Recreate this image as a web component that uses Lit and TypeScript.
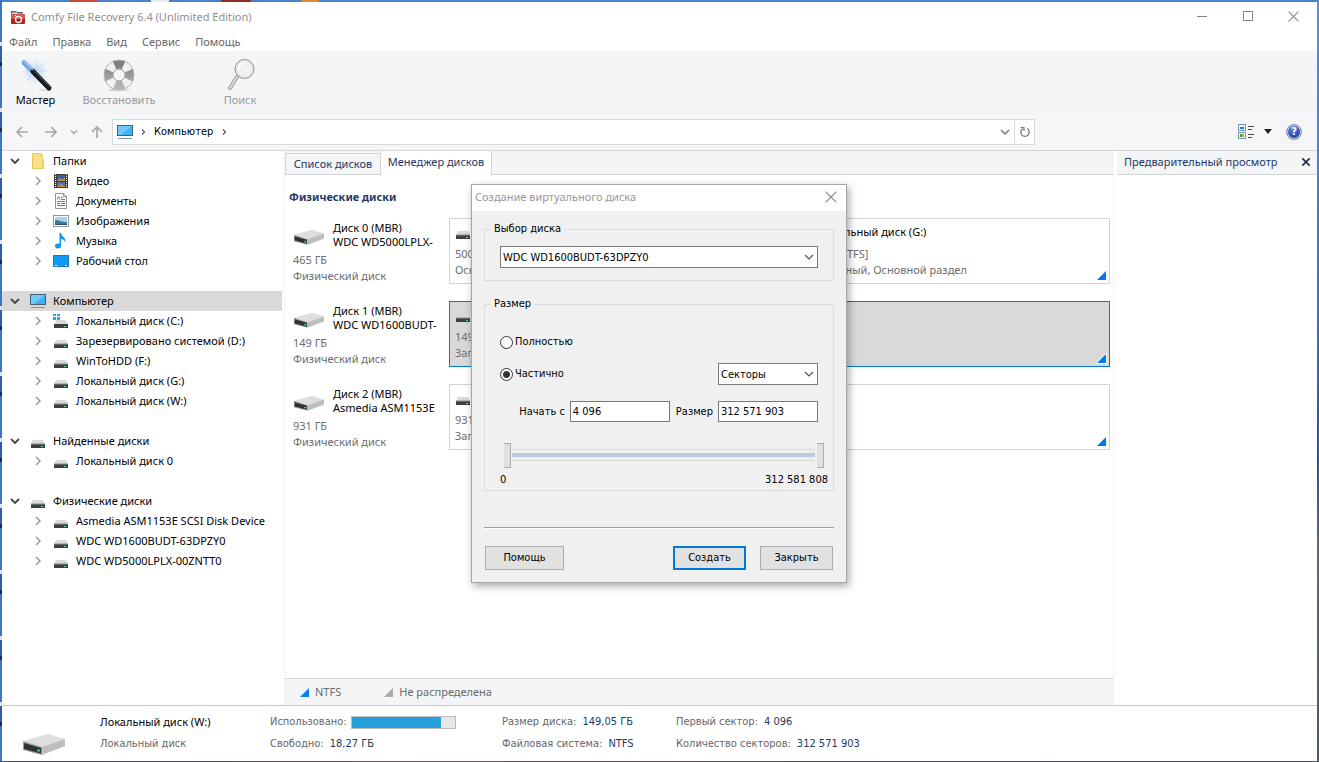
import { LitElement, html, svg, css, nothing, TemplateResult } from "lit";
import { customElement, state } from "lit/decorators.js";
import { classMap } from "lit/directives/class-map.js";

/* ---------- icons ---------- */

const appIcon = html`<svg width="16" height="16" viewBox="0 0 16 16">
  <path d="M1 2h5l1 1h6v5H1z" fill="#4e6f96"/><path d="M2 3.500h5l1 1h7v3H2z" fill="#ecc9c4"/>
  <rect x="1" y="6" width="14" height="9" rx="1" fill="#b3201c"/><rect x="1" y="5" width="14" height="5" rx="1" fill="#d2574c"/>
  <circle cx="8.500" cy="10.500" r="3" fill="none" stroke="#f6e6e4" stroke-width="1.500"/><path d="M5 6l2 2" stroke="#f6e6e4"/></svg>`;

const wand = html`<svg width="34" height="34" viewBox="0 0 34 34">
  <defs>
    <radialGradient id="glow"><stop offset="0" stop-color="#a9c6f5" stop-opacity=".9"/><stop offset="1" stop-color="#cfe0fa" stop-opacity="0"/></radialGradient>
    <linearGradient id="tip" x1="0" y1="1" x2="1" y2="0"><stop offset="0" stop-color="#2f62bd"/><stop offset=".6" stop-color="#8db8f7"/><stop offset="1" stop-color="#3a6fcf"/></linearGradient>
  </defs>
  <circle cx="16" cy="14" r="13" fill="url(#glow)"/>
  <path d="M18 2v22M6 13h22M8 22L26 5" stroke="#c9dbf8" stroke-width="1" opacity=".8"/>
  <path d="M20 32h12" stroke="#c5c9cd" stroke-width="1"/>
  <path d="M5 4.500L15 14.500" stroke="url(#tip)" stroke-width="5" stroke-linecap="round"/>
  <path d="M14 13.500L30 30" stroke="#15181c" stroke-width="5" stroke-linecap="round"/>
  <path d="M15.500 13.500L31 29" stroke="#59616b" stroke-width="1"/>
  <path d="M5.500 3.500L14.500 12.500" stroke="#a8caff" stroke-width="1"/></svg>`;

const lifebuoy = html`<svg width="34" height="34" viewBox="0 0 34 34">
  <defs><linearGradient id="buoy" x1="0" y1="0" x2="0" y2="1"><stop offset="0" stop-color="#7f7f7f"/><stop offset="1" stop-color="#b5b5b5"/></linearGradient></defs>
  <ellipse cx="17" cy="32" rx="11" ry="1.500" fill="#d5d7d8"/>
  <circle cx="17" cy="17" r="10.500" fill="none" stroke="url(#buoy)" stroke-width="9"/>
  <circle cx="17" cy="17" r="10.500" fill="none" stroke="#f1f1f1" stroke-width="9" stroke-dasharray="7.500 9" stroke-dashoffset="4" transform="rotate(45 17 17)"/>
  <circle cx="17" cy="17" r="15" fill="none" stroke="#b5b5b5" stroke-width="1"/>
  <circle cx="17" cy="17" r="6" fill="none" stroke="#a5a5a5" stroke-width="1"/></svg>`;

const magnifier = html`<svg width="34" height="34" viewBox="0 0 34 34">
  <path d="M14 19L7 30" stroke="#9d9d9d" stroke-width="4" stroke-linecap="round"/>
  <path d="M14 19L7 30" stroke="#dedede" stroke-width="2" stroke-linecap="round"/>
  <circle cx="21.500" cy="11" r="9.500" fill="#f0f1f1" stroke="#8f8f8f" stroke-width="1"/>
  <circle cx="21.500" cy="11" r="8.300" fill="none" stroke="#dcdcdc" stroke-width="1"/>
  <path d="M15.500 11a6 6 0 0 1 6-6" fill="none" stroke="#fff" stroke-width="2"/></svg>`;

const monitor = html`<svg width="18" height="16" viewBox="0 0 18 16">
  <rect x="1.500" y="1.500" width="15" height="10" fill="#3fb2f4" stroke="#46606f"/>
  <path d="M2 2h14L5 11H2z" fill="#71c9fa"/>
  <path d="M2 14.500h14" stroke="#7e93a0"/></svg>`;

const drive = html`<svg width="16" height="16" viewBox="0 0 16 16">
  <path d="M3 7h10l2 4H1z" fill="#d8dadc"/><rect x="1" y="11" width="14" height="4" fill="#3b3f42"/>
  <path d="M1 11h14" stroke="#8b8f92" stroke-width="1"/><rect x="11" y="13" width="2" height="1" fill="#5fe39a"/></svg>`;

const systemDrive = html`<svg width="16" height="16" viewBox="0 0 16 16">
  <path d="M3 7h10l2 4H1z" fill="#d8dadc"/><rect x="1" y="11" width="14" height="4" fill="#3b3f42"/>
  <rect x="11" y="13" width="2" height="1" fill="#5fe39a"/>
  <path d="M0 1h3v2H0zM4 1h3v2H4zM0 4h3v3H0zM4 4h3v3H4z" fill="#19aee0"/></svg>`;

const folder = html`<svg width="16" height="16" viewBox="0 0 16 16">
  <path d="M2.500 .500h9l2 8v7h-11z" fill="#fbdf83" stroke="#e9c65d"/><path d="M12 9.500h2v6h-2z" fill="#f3cc5b"/></svg>`;

const film = html`<svg width="16" height="16" viewBox="0 0 16 16">
  <rect x="1" y="1" width="14" height="14" fill="#3f3b39"/><rect x="4" y="2" width="8" height="6" fill="#3a5fa8"/><rect x="4" y="9" width="8" height="5" fill="#4c6fb5"/>
  <path d="M4 8l3-3 2 2 3-3v4zM4 14l4-3 4 2v1z" fill="#c9912e"/>
  <path d="M2.500 1v14M13.500 1v14" stroke="#fff" stroke-width="1" stroke-dasharray="1 1"/></svg>`;

const documentIcon = html`<svg width="16" height="16" viewBox="0 0 16 16">
  <path d="M2.500 .500h8l3 3v12h-11z" fill="#fff" stroke="#8f9498"/><path d="M10.500 .500v3h3" fill="none" stroke="#8f9498"/>
  <path d="M4 6.500l1.500-3L7 6.500M8 4.500h2M8 6.500h4M4 8.500h8M4 10.500h3M8 10.500h4M4 12.500h8" stroke="#2c93c8" fill="none"/></svg>`;

const picture = html`<svg width="16" height="16" viewBox="0 0 16 16">
  <rect x=".500" y="2.500" width="15" height="11" fill="#fff" stroke="#93989c"/><rect x="2" y="4" width="12" height="8" fill="#a7d3ee"/>
  <path d="M2 7c4 0 6 2 12 2v3H2z" fill="#3f7796"/><path d="M2 11h12v1H2z" fill="#2b4f63"/></svg>`;

const note = html`<svg width="16" height="16" viewBox="0 0 16 16">
  <ellipse cx="5" cy="13" rx="3" ry="2.400" fill="#1595e8"/><path d="M6.500 0h1.500c0 4 6 4 4 10 0-3-2-4-4-4v7H6.500z" fill="#1595e8"/></svg>`;

const desktop = html`<svg width="16" height="16" viewBox="0 0 16 16">
  <rect x=".500" y="2.500" width="15" height="11" fill="#109bf3" stroke="#1b79bd"/>
  <path d="M2 12.500h2M12 12.500h2" stroke="#fff"/></svg>`;

const externalDrive = (w: number, h: number) => html`<svg width=${w} height=${h} viewBox="0 0 42 22">
  <path d="M0 8L25 1l17 5-23 8z" fill="#dedede"/><path d="M0 8l19 6v8L0 17z" fill="#9a9a9a"/>
  <path d="M1 10l17 5v5.500L1 16z" fill="#2f3232"/><path d="M19 14L42 6v7l-23 9z" fill="#bdbdbd"/>
  <rect x="14" y="16.500" width="3" height="2" fill="#37c98a"/></svg>`;

const arrow = (rotate: number) => html`<svg width="14" height="14" viewBox="0 0 14 14">
  <g transform="rotate(${rotate} 7 7)"><path d="M13 7H2M7 2L2 7l5 5" fill="none" stroke="#a4a7aa" stroke-width="1.700"/></g></svg>`;

const chevronRight = html`<svg width="8" height="10" viewBox="0 0 8 10"><path d="M2 1l4 4-4 4" fill="none" stroke="#9b9b9b" stroke-width="1.500"/></svg>`;
const chevronSmall = html`<svg width="6" height="8" viewBox="0 0 6 8"><path d="M2 1.500L4.500 4 2 6.500" fill="none" stroke="#555" stroke-width="1.200"/></svg>`;
const chevronDown = (color: string, width = 1.2) => html`<svg class="chev" width="10" height="8" viewBox="0 0 10 8">
  <path d="M1 2l4 4 4-4" fill="none" stroke=${color} stroke-width=${width}/></svg>`;
const chevronTiny = html`<svg width="8" height="6" viewBox="0 0 8 6"><path d="M1 1.500l3 3 3-3" fill="none" stroke="#a4a7aa" stroke-width="1.500"/></svg>`;
const cross = (size: number, color: string, width: number) => html`<svg width=${size} height=${size} viewBox="0 0 10 10">
  <path d="M0.500 .500l9 9M9.500 .500l-9 9" stroke=${color} stroke-width=${width}/></svg>`;
const refresh = html`<svg width="12" height="14" viewBox="0 0 12 14">
  <path d="M8 3.500A4.200 4.200 0 1 1 4 3.500" fill="none" stroke="#7a7a7a" stroke-width="1.400"/><path d="M1.500 2.500H5V6" fill="none" stroke="#7a7a7a" stroke-width="1.200"/></svg>`;
const viewMode = html`<svg width="16" height="16" viewBox="0 0 16 16">
  <rect x=".500" y=".500" width="7" height="6" fill="#e8f2fa" stroke="#7896b5"/><rect x="2" y="3" width="4" height="2" fill="#2d8a72"/>
  <rect x=".500" y="8.500" width="7" height="6" fill="#e8f2fa" stroke="#7896b5"/><path d="M2 10h2v3H2z" fill="#44a04c"/><path d="M4 10h2v3H4z" fill="#c99a2a"/>
  <path d="M10 2.500h6M10 5.500h4M10 10.500h6M10 13.500h4" stroke="#454c54"/></svg>`;
const corner = (color: string, outlined = false) => html`<svg class="corner" width="11" height="11" viewBox="0 0 11 11">
  ${outlined ? svg`<path d="M11 -1V11H-1z" fill="#fff"/>` : nothing}<path d="M10 1v9H1z" fill=${color}/></svg>`;

/* ---------- data ---------- */

interface Item { label: string; icon: TemplateResult }
interface Branch { label: string; icon: TemplateResult; children: Item[] }

const branches: Branch[] = [
  { label: "Папки", icon: folder, children: [
    { label: "Видео", icon: film }, { label: "Документы", icon: documentIcon }, { label: "Изображения", icon: picture },
    { label: "Музыка", icon: note }, { label: "Рабочий стол", icon: desktop } ] },
  { label: "Компьютер", icon: monitor, children: [
    { label: "Локальный диск (C:)", icon: systemDrive }, { label: "Зарезервировано системой (D:)", icon: drive },
    { label: "WinToHDD (F:)", icon: drive }, { label: "Локальный диск (G:)", icon: drive }, { label: "Локальный диск (W:)", icon: drive } ] },
  { label: "Найденные диски", icon: drive, children: [{ label: "Локальный диск 0", icon: drive }] },
  { label: "Физические диски", icon: drive, children: [
    { label: "Asmedia ASM1153E SCSI Disk Device", icon: drive }, { label: "WDC WD1600BUDT-63DPZY0", icon: drive },
    { label: "WDC WD5000LPLX-00ZNTT0", icon: drive } ] },
];

interface Part { name: string; size: string; info: string; }
const disks: { name: string; model: string; size: string; parts: Part[] }[] = [
  { name: "Диск 0 (MBR)", model: "WDC WD5000LPLX-", size: "465 ГБ", parts: [
    { name: "", size: "500 МБ", info: "Основной раздел" },
    { name: "Локальный диск (G:)", size: "465 ГБ [NTFS]", info: "Загрузочный, Основной раздел" } ] },
  { name: "Диск 1 (MBR)", model: "WDC WD1600BUDT-", size: "149 ГБ", parts: [
    { name: "", size: "149 ГБ", info: "Загрузочный" } ] },
  { name: "Диск 2 (MBR)", model: "Asmedia ASM1153E", size: "931 ГБ", parts: [
    { name: "", size: "931 ГБ", info: "Загрузочный" } ] },
];

const baseStyles = css`
  * { box-sizing: border-box; }
  svg { display: block; flex: none; }
  button, input, select { font: inherit; color: inherit; margin: 0; border-radius: 0; }
  .plain { border: 0; padding: 0; background: none; display: flex; align-items: center; justify-content: center; }
`;

/* ---------- virtual disk dialog ---------- */

@customElement("virtual-disk-dialog")
export class VirtualDiskDialog extends LitElement {
  @state() private partial = true;

  static styles = [baseStyles, css`
    :host { box-sizing: border-box; display: block; width: 376px; background: #f0f0f0; border: 1px solid #a5a5a5; color: #000;
      box-shadow: 2px 3px 8px rgba(0, 0, 0, .35); font: 11px/14px "DejaVu Sans Condensed", "DejaVu Sans", sans-serif; }
    header { display: flex; align-items: center; justify-content: space-between; height: 26px; padding: 0 9px 2px 3px;
      background: #fff; color: #999; font: 11px/16px "Noto Sans", sans-serif; }
    h2 { margin: 0; font: inherit; }
    main { padding: 11px 12px 12px; }
    fieldset { margin: 0 0 16px; border: 1px solid #dcdcdc; padding: 10px 15px 12px; min-width: 0; }
    legend { margin-left: -9px; padding: 0 3px; }
    .select { display: grid; align-items: center; }
    .select > * { grid-area: 1 / 1; }
    .select select { appearance: none; width: 100%; height: 22px; border: 1px solid #7a7a7a; background: #fff; padding: 1px 2px 0; }
    .chev { justify-self: end; margin-right: 4px; pointer-events: none; }
    .size { padding: 20px 15px 3px; margin-bottom: 36px; }
    .row { display: flex; align-items: center; justify-content: space-between; height: 22px; margin-bottom: 10px; }
    .radio { display: flex; align-items: center; gap: 2px; }
    .radio input { appearance: none; width: 13px; height: 13px; border: 1px solid #333; border-radius: 50%; background: #fff; }
    .radio input:checked { background: radial-gradient(circle, #333 0 3px, #fff 4px); }
    .unit { width: 100px; }
    .range { display: grid; grid-template-columns: 1fr 100px auto 100px; align-items: center; margin-top: 16px; }
    .range label { padding: 0 5px 0 6px; text-align: right; }
    .range input { width: 100%; min-width: 0; height: 21px; border: 1px solid #7a7a7a; background: #fff; padding: 0 2px; }
    .slider { display: grid; align-items: center; height: 26px; margin: 20px -6px 0 4px;
      background: linear-gradient(#b9c9de, #b9c9de) 8px 11px / calc(100% - 17px) 4px no-repeat,
        linear-gradient(#dddccb 0 1px, #eef0f0 1px 11px, #dddccb 11px 12px) 8px 7px / calc(100% - 17px) 12px no-repeat; }
    .slider input { grid-area: 1 / 1; appearance: none; width: 100%; height: 26px; background: none; pointer-events: none; outline: 0; }
    .slider input::-webkit-slider-thumb { appearance: none; width: 7px; height: 25px; background: #e0e0e0; border: 1px solid #adadad; border-left: 0; pointer-events: auto; }
    .scale { display: flex; justify-content: space-between; margin: 5px -10px 0 0; }
    footer { display: flex; gap: 14px; border-top: 1px solid #a0a0a0; box-shadow: inset 0 1px #fff; padding: 18px 1px 0; }
    footer button { width: 73px; height: 24px; padding: 0; border: 1px solid #adadad; background: #e1e1e1; }
    footer .help { width: 79px; margin-right: auto; }
    footer .primary { border: 2px solid #0078d7; }
  `];

  render() {
    return html`
      <header><h2>Создание виртуального диска</h2><button class="plain" aria-label="Закрыть окно">${cross(12, "#888", 1)}</button></header>
      <main>
        <fieldset>
          <legend>Выбор диска</legend>
          <div class="select"><select aria-label="Выбор диска"><option>WDC WD1600BUDT-63DPZY0</option></select>${chevronDown("#555")}</div>
        </fieldset>
        <fieldset class="size">
          <legend>Размер</legend>
          <div class="row"><label class="radio"><input type="radio" name="mode" .checked=${!this.partial} @change=${() => (this.partial = false)}>Полностью</label></div>
          <div class="row">
            <label class="radio"><input type="radio" name="mode" .checked=${this.partial} @change=${() => (this.partial = true)}>Частично</label>
            <div class="select unit"><select aria-label="Единицы"><option>Секторы</option></select>${chevronDown("#555")}</div>
          </div>
          <div class="range">
            <label for="start">Начать с</label><input id="start" value="4 096">
            <label for="size">Размер</label><input id="size" value="312 571 903">
          </div>
          <div class="slider">
            <input class="from" type="range" aria-label="Начало" min="0" max="312581808" value="4096">
            <input class="to" type="range" aria-label="Конец" min="0" max="312581808" value="312575999">
          </div>
          <div class="scale"><span>0</span><span>312 581 808</span></div>
        </fieldset>
        <footer><button class="help">Помощь</button><button class="primary">Создать</button><button>Закрыть</button></footer>
      </main>`;
  }
}

/* ---------- main window ---------- */

@customElement("app-root")
export class AppRoot extends LitElement {
  @state() private selectedBranch = "Компьютер";

  static styles = [baseStyles, css`
    :host { box-sizing: border-box; display: flex; flex-direction: column; min-height: 100vh; padding: 2px 2px 1px; position: relative; color: #000;
      font: 11px/14px "Noto Sans", sans-serif;
      background:
        linear-gradient(90deg, transparent 70px, #c84a35 70px 97px, transparent 97px 151px, #e8eef0 151px 169px, transparent 169px 221px, #8e2f22 221px 251px, transparent 251px 301px, #d98a35 301px 319px, transparent 319px) 0 0 / 100% 2px no-repeat,
        linear-gradient(90deg, #4a5560, #6a5560 30%, #4a5560) 0 100% / 100% 1px no-repeat,
        linear-gradient(#5a8fd0, #3f74b8 40%, #2b5596 60%, #6a6470 72%, #4a5a6a) 100% 0 / 2px 100% no-repeat,
        repeating-linear-gradient(#3f74c0 0 42px, #dfe6ee 42px 46px, #2f5fa8 46px 62px, #1d2a4a 62px 66px) 0 0 / 2px 100% no-repeat,
        #4a82c8; }
    .titlebar { display: flex; align-items: center; height: 30px; padding: 0 18px 0 8px; gap: 5px; background: #fff; color: #8f8f8f; }
    .titlebar h1 { margin: 0; font: inherit; flex: 1; }
    .winbtns { display: flex; gap: 34px; padding-bottom: 2px; }
    .menu { display: flex; gap: 15px; height: 19px; padding: 0 7px; align-items: center; background: #fff; color: #666; }
    .menu button { color: inherit; }
    .toolbar { display: flex; height: 64px; background: #f3f5f7; padding-top: 7px; }
    .tool { flex-direction: column; justify-content: flex-start; width: 67px; color: #000; line-height: 16px; }
    .tool:disabled { color: #999; width: 100px; }
    .tool + .tool:last-child { margin-left: 21px; }
    .navbar { display: flex; align-items: center; height: 36px; padding: 0 15px 2px 13px; background: #f5f6f7; border-bottom: 1px solid #d2d4d6;
      font-family: "DejaVu Sans Condensed", "DejaVu Sans", sans-serif; }
    .nav { display: flex; width: 97px; gap: 15px; align-items: center; }
    .nav .recent { margin: 0 -3px; }
    .address { display: flex; flex: 1; height: 26px; border: 1px solid #d9d9d9; background: #fff; align-items: center; padding-left: 3px; }
    .address .here { padding: 1px 8px 0; }
    .address .monitor { padding-right: 6px; }
    .address .open { margin-left: auto; width: 18px; }
    .address .reload { width: 20px; height: 100%; border-left: 1px solid #d9d9d9; }
    .tools { display: flex; align-items: center; justify-content: flex-end; width: 267px; }
    .tools .caret { border: 4px solid transparent; border-top: 5px solid #222; border-bottom: 0; margin: 0 14px 0 10px; }
    .tools .help { width: 16px; height: 16px; border-radius: 50%; border: 1px solid #8f97a8; color: #fff; font-weight: bold;
      background: radial-gradient(circle at 40% 30%, #5f87dd, #1d3ea3 70%); box-shadow: inset 0 0 0 1px #cfd8ee; }

    .content { flex: 1; display: grid; grid-template-columns: 280px minmax(0, 1fr) 200px; background: #fff; }
    .tree ul { margin: 0; padding: 0; list-style: none; }
    .tree > ul > li { margin-bottom: 20px; }
    .node { display: grid; align-items: center; height: 20px; grid-template-columns: 16px 20px 1fr; column-gap: 5px; width: 100%; padding: 0 0 0 5px; text-align: left; white-space: nowrap; justify-content: start; }
    .node svg { justify-self: center; }
    .leaf { padding-left: 28px; }
    .selected { background: #d9d9d9; }

    .center { display: flex; flex-direction: column; margin: 0 4px 0 3px; min-width: 0; box-shadow: 1px 0 #f3f3f3, -1px 0 #f3f3f3; }
    .tabs { display: flex; height: 24px; background: linear-gradient(#d3d6d8, #d3d6d8) 0 100% / 100% 1px no-repeat #f3f5f7; color: #1f3864; }
    .tab { align-self: flex-end; height: 22px; border: 1px solid #d3d6d8; width: 96px; color: inherit; }
    .tab.active { align-self: stretch; height: 24px; width: 111px; background: #fff; border-width: 0 1px 0 0; padding-bottom: 3px; }
    .disks { flex: 1; padding: 14px 3px 0 4px; }
    .disks h3 { margin: 0 0 13px; font: bold 11px/16px "Noto Sans", sans-serif; color: #1f3864; }
    .disk { display: grid; grid-template-columns: 160px minmax(0, 1fr); height: 66px; margin-bottom: 17px; }
    .meta { display: grid; grid-template-columns: 31px minmax(0, 107px); column-gap: 9px; align-content: start; padding: 3px 0 0 4px; color: #6d6d6d; line-height: 16px; }
    .meta svg { margin: 8px 0 0 1px; }
    .meta p { margin: 0; grid-column: 1 / 3; }
    .meta .name { grid-column: 2; color: #000; line-height: 14px; margin-bottom: 3px; white-space: nowrap; }
    .parts { display: grid; grid-template-columns: 337fr 324fr; }
    .parts.one { grid-template-columns: 1fr; }
    .part { position: relative; border: 1px solid #d3d3d3; padding: 5px 5px 0; color: #6d6d6d; white-space: nowrap; overflow: hidden; line-height: 16px; }
    .parts .part:nth-child(2) { padding-left: 11px; }
    .part.chosen { border-color: #0078d7; background: #d9d9d9; }
    .part p { margin: 0; }
    .part .title { display: flex; gap: 4px; color: #000; height: 16px; margin-bottom: 6px; }
    .part .corner { position: absolute; right: 2px; bottom: 2px; }
    .legend { display: flex; align-items: center; height: 27px; padding: 0 14px; gap: 5px; background: #f3f5f6; border-top: 1px solid #d3d6d8; color: #6b6b6b; }
    .legend span:first-of-type { margin-right: 37px; }

    .preview h3 { display: flex; align-items: center; justify-content: space-between; height: 24px; margin: 0; padding: 0 7px 2px 7px; font: inherit;
      background: #f3f5f7; border-bottom: 1px solid #d3d6d8; color: #1f3864; }

    .status { display: grid; grid-template-columns: 77px 170px 232px 174px 1fr; grid-template-rows: 22px 22px; align-items: center; height: 56px; padding: 5px 0 0 21px;
      background: #fff; border-top: 1px solid #c9c9c9; color: #666; font-family: "DejaVu Sans Condensed", "DejaVu Sans", sans-serif; }
    .status > svg { grid-area: 1 / 1 / 3 / 2; align-self: end; }
    .status p { margin: 0; display: flex; gap: 6px; align-items: center; }
    .status b { font-weight: normal; color: #1f3864; }
    .status .volume { color: #000; font-family: "Noto Sans", sans-serif; }
    .status .meter { gap: 4px; }
    .bar { width: 105px; height: 13px; border: 1px solid #bcbcbc; background: #e6e6e6; }
    .bar span { display: block; height: 100%; background: #26a0da; }

    virtual-disk-dialog { position: absolute; left: 471px; top: 184px; }
  `];

  private renderBranch(b: Branch) {
    return html`<li>
      <button class=${classMap({ plain: true, node: true, selected: b.label === this.selectedBranch })}
        @click=${() => (this.selectedBranch = b.label)}>${chevronDown("#444", 1.8)}${b.icon}<span>${b.label}</span></button>
      <ul>${b.children.map((c) => html`<li><button class="plain node leaf">${chevronRight}${c.icon}<span>${c.label}</span></button></li>`)}</ul>
    </li>`;
  }

  render() {
    return html`
      <header class="titlebar">${appIcon}<h1>Comfy File Recovery 6.4 (Unlimited Edition)</h1>
        <div class="winbtns">
          <button class="plain" aria-label="Свернуть"><svg width="12" height="12" viewBox="0 0 12 12"><path d="M1 6.500h10" stroke="#888"/></svg></button>
          <button class="plain" aria-label="Развернуть"><svg width="12" height="12" viewBox="0 0 12 12"><rect x="1.500" y="1.500" width="9" height="9" fill="none" stroke="#888"/></svg></button>
          <button class="plain" aria-label="Закрыть">${cross(11, "#888", 1)}</button>
        </div></header>
      <nav class="menu">${["Файл", "Правка", "Вид", "Сервис", "Помощь"].map((m) => html`<button class="plain">${m}</button>`)}</nav>
      <div class="toolbar">
        <button class="plain tool">${wand}Мастер</button>
        <button class="plain tool" disabled>${lifebuoy}Восстановить</button>
        <button class="plain tool" disabled>${magnifier}Поиск</button>
      </div>
      <div class="navbar">
        <div class="nav">
          <button class="plain" aria-label="Назад">${arrow(0)}</button><button class="plain" aria-label="Вперёд">${arrow(180)}</button>
          <button class="plain recent" aria-label="История">${chevronTiny}</button><button class="plain" aria-label="Вверх">${arrow(90)}</button>
        </div>
        <div class="address"><span class="monitor">${monitor}</span>${chevronSmall}<span class="here">Компьютер</span>${chevronSmall}
          <button class="plain open" aria-label="Адреса">${chevronDown("#777", 1.5)}</button>
          <button class="plain reload" aria-label="Обновить">${refresh}</button></div>
        <div class="tools"><button class="plain" aria-label="Режим просмотра">${viewMode}<span class="caret"></span></button><button class="plain help">?</button></div>
      </div>
      <div class="content">
        <nav class="tree"><ul>${branches.map((b) => this.renderBranch(b))}</ul></nav>
        <section class="center">
          <div class="tabs"><button class="plain tab">Список дисков</button><button class="plain tab active">Менеджер дисков</button></div>
          <div class="disks">
            <h3>Физические диски</h3>
            ${disks.map((d, i) => html`<div class="disk">
              <div class="meta">${externalDrive(30, 16)}<p class="name">${d.name}<br>${d.model}</p><p>${d.size}</p><p>Физический диск</p></div>
              <div class=${classMap({ parts: true, one: d.parts.length === 1 })}>${d.parts.map((p) => html`
                <div class=${classMap({ part: true, chosen: i === 1 })}>
                  <p class="title">${drive}${p.name}</p><p>${p.size}</p><p>${p.info}</p>${corner("#0078f0", i === 1)}
                </div>`)}</div>
            </div>`)}
          </div>
          <div class="legend">${corner("#0a84f0")}<span>NTFS</span>${corner("#a9a9a9")}<span>Не распределена</span></div>
        </section>
        <aside class="preview"><h3>Предварительный просмотр<button class="plain" aria-label="Закрыть панель">${cross(8, "#1b2a44", 2)}</button></h3></aside>
      </div>
      <footer class="status">
        ${externalDrive(42, 22)}
        <p class="volume">Локальный диск (W:)</p>
        <p class="meter">Использовано:<span class="bar"><span style="width:87%"></span></span></p>
        <p>Размер диска: <b>149,05 ГБ</b></p><p>Первый сектор: <b>4 096</b></p>
        <p>Локальный диск</p><p>Свободно: <b>18,27 ГБ</b></p>
        <p>Файловая система: <b>NTFS</b></p><p>Количество секторов: <b>312 571 903</b></p>
      </footer>
      <virtual-disk-dialog role="dialog" aria-label="Создание виртуального диска"></virtual-disk-dialog>`;
  }
}
